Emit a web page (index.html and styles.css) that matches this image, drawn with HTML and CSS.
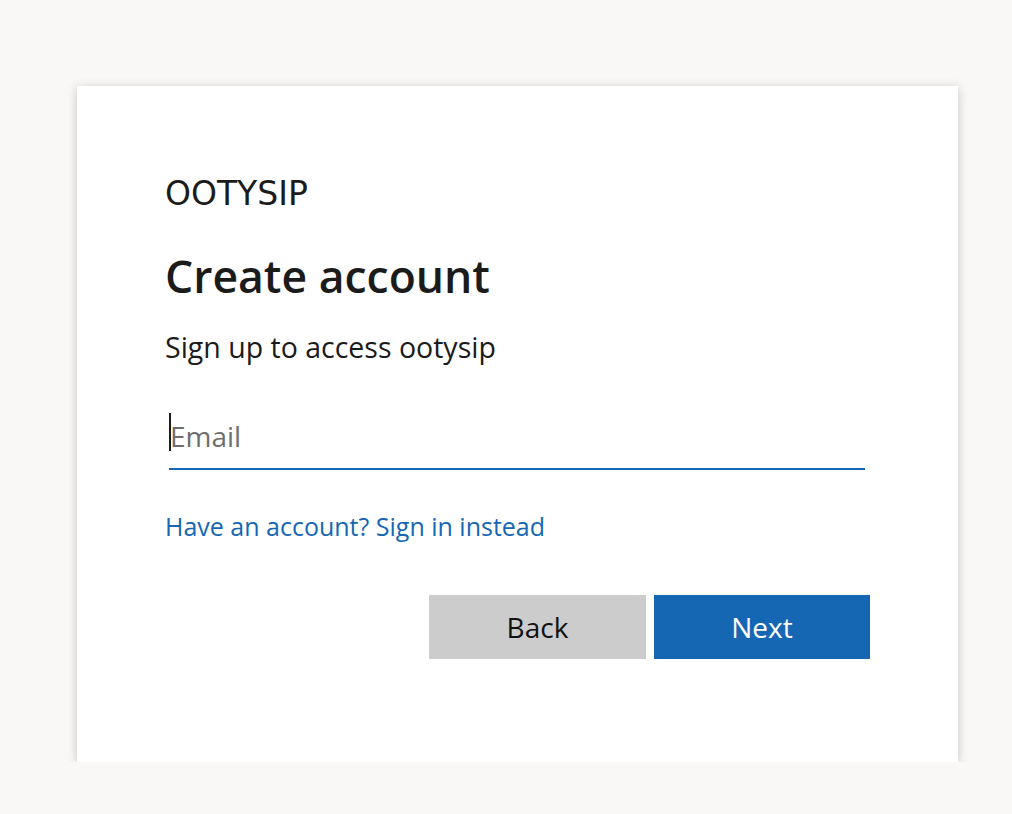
FILE: index.html
```html
<!DOCTYPE html>
<html lang="en">
<head>
<meta charset="utf-8">
<title>Create account</title>
<link rel="stylesheet" href="styles.css">
</head>
<body>
<main class="card">
  <div class="brand">OOTYSIP</div>
  <h1 class="title">Create account</h1>
  <p class="subtitle">Sign up to access ootysip</p>
  <div class="field">
    <span class="caret"></span>
    <input class="email" type="text" placeholder="Email">
  </div>
  <a class="link" href="#">Have an account? Sign in instead</a>
  <div class="actions">
    <button class="btn btn-back" type="button">Back</button>
    <button class="btn btn-next" type="button">Next</button>
  </div>
</main>
</body>
</html>
```

FILE: styles.css
```css
html, body {
  margin: 0;
  padding: 0;
  background: #f9f8f7;
  font-family: "Open Sans", "Noto Sans", sans-serif;
  color: #1b1b1b;
}

.card {
  box-sizing: border-box;
  width: 881px;
  height: 676px;
  margin: 86px 0 0 77px;
  padding: 90px 88px 0 88px;
  background: #ffffff;
  box-shadow: 0 2px 10px rgba(0, 0, 0, 0.2);
  display: flex;
  flex-direction: column;
}

.brand {
  font-family: "DejaVu Sans", Verdana, sans-serif;
  font-size: 33px;
  line-height: 36px;
  letter-spacing: 0;
  color: #1b1b1b;
}

.title {
  margin: 36px 0 0 0;
  font-size: 44.5px;
  line-height: 56px;
  font-weight: 600;
  color: #1b1b1b;
}

.subtitle {
  margin: 24px 0 0 0;
  font-size: 28.5px;
  line-height: 38px;
}

.field {
  position: relative;
  margin: 30px 5px 0 4px;
  border-bottom: 2px solid #1567b4;
}

.caret {
  position: absolute;
  left: 0;
  top: 17px;
  width: 2px;
  height: 38px;
  background: #1b1b1b;
}

.email {
  box-sizing: border-box;
  display: block;
  width: 100%;
  height: 72px;
  border: none;
  outline: none;
  padding: 7px 0 0 1px;
  font-family: inherit;
  font-size: 28px;
  background: transparent;
}

.email::placeholder {
  color: #6e6e6e;
}

.link {
  margin-top: 39px;
  font-size: 25px;
  line-height: 34px;
  color: #1567b4;
  text-decoration: none;
  align-self: flex-start;
}

.actions {
  margin-top: 52px;
  display: flex;
  justify-content: flex-end;
  gap: 8px;
}

.btn {
  width: 217px;
  height: 64px;
  border: none;
  font-family: inherit;
  font-size: 28px;
  cursor: pointer;
}

.btn-back {
  background: #cccccc;
  color: #111111;
}

.btn-next {
  width: 216px;
  background: #1567b4;
  color: #ffffff;
}
```
